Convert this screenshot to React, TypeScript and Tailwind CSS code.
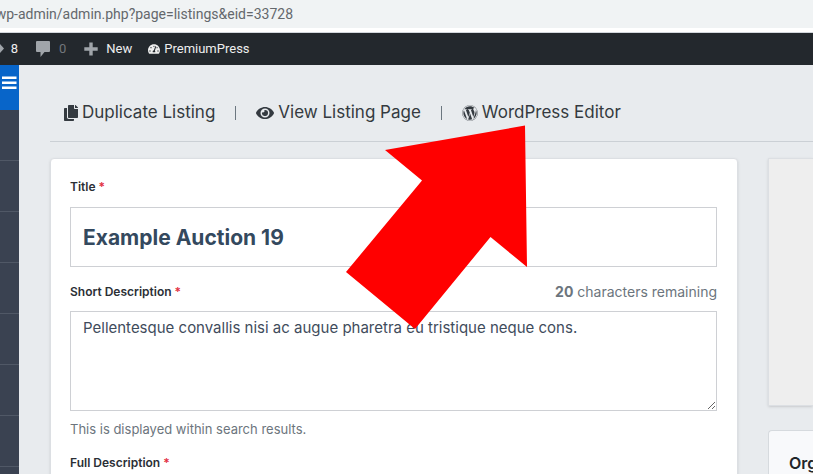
import type { ReactNode } from "react";
import { FaCopy, FaEye, FaTachometerAlt, FaWordpress } from "react-icons/fa";

const menuRows = [1, 2, 3, 4, 5, 6, 7, 8];

function AddressBar() {
  return (
    <div className="flex h-[33px] shrink-0 border-b border-[#d3d7dc] bg-white pb-1">
      <div className="flex flex-1 items-center bg-[#f0f3f4]">
        <div className="flex w-[293px] justify-end overflow-hidden whitespace-nowrap font-[Roboto,sans-serif] text-sm leading-5 text-[#64686c]">
          wp-admin/admin.php?page=listings&amp;eid=33728
        </div>
      </div>
    </div>
  );
}

function AdminBar() {
  return (
    <nav className="flex h-8 shrink-0 items-center bg-[#23282d] font-[Roboto,sans-serif] text-[13px] leading-8 text-[#eeeeee]">
      <a href="#updates" className="flex w-[18px] items-center justify-between">
        <svg width="4" height="10" viewBox="0 0 4 10" fill="#a0a5aa" aria-hidden="true">
          <path d="M0 0 4 4.500 0 9z" />
        </svg>
        8
      </a>
      <a href="#comments" className="ml-[17px] flex items-center gap-2 text-[#72777c]">
        <svg width="16" height="16" viewBox="0 0 16 16" fill="#a0a5aa" aria-hidden="true">
          <path d="M2 0h12q1 0 1 1v9q0 1-1 1H9.500L5.500 16v-5H2q-1 0-1-1V1q0-1 1-1z" />
        </svg>
        0
      </a>
      <a href="#new" className="ml-[18px] flex items-center gap-2">
        <svg width="14" height="14" viewBox="0 0 14 14" fill="#a0a5aa" aria-hidden="true">
          <path d="M5.300 0.500h3.400v4.800h5v3.400h-5v4.800H5.300V8.700h-5V5.300h5z" />
        </svg>
        New
      </a>
      <a href="#premiumpress" className="ml-4 flex items-center gap-1">
        <FaTachometerAlt size={12} />
        PremiumPress
      </a>
    </nav>
  );
}

function Sidebar() {
  return (
    <aside className="w-[19px] shrink-0 bg-[#3a4251]">
      <button type="button" aria-label="Menu" className="flex h-[45px] w-full items-start bg-[#0865c9] pt-[11px] pl-[2px]">
        <svg width="15" height="14" viewBox="0 0 15 14" fill="#ffffff" aria-hidden="true">
          <path d="M0 0.500h14.500v2.500H0zM0 5.500h14.500v2.500H0zM0 10.500h14.500v2.500H0z" />
        </svg>
      </button>
      {menuRows.map((row) => (
        <div key={row} className="h-[51px] border-b border-[#505866]" />
      ))}
    </aside>
  );
}

function Divider() {
  return <span className="h-[14px] w-px bg-[#6c7780]" />;
}

function FieldLabel({ htmlFor, children }: { htmlFor: string; children: ReactNode }) {
  return (
    <label htmlFor={htmlFor} className="text-xs leading-5 font-semibold text-[#2b2f36]">
      {children} <span className="text-[#e2303f]">*</span>
    </label>
  );
}

function ListingForm() {
  return (
    <form className="min-w-0 rounded-t border border-[#dcdfe3] bg-white pt-[18px] pr-5 pl-[19px] shadow-sm">
      <div className="flex flex-col gap-[10px]">
        <FieldLabel htmlFor="title">Title</FieldLabel>
        <input
          id="title"
          type="text"
          defaultValue="Example Auction 19"
          className="h-[60px] w-full border border-[#ced0d4] px-3 text-[21px] font-bold text-[#34495e] outline-none"
        />
      </div>
      <div className="mt-[15px] flex items-center justify-between">
        <FieldLabel htmlFor="short">Short Description</FieldLabel>
        <span className="text-sm leading-5 text-[#6c757d]">
          <b>20</b> characters remaining
        </span>
      </div>
      <textarea
        id="short"
        defaultValue="Pellentesque convallis nisi ac augue pharetra eu tristique neque cons."
        className="mt-[9px] block h-[100px] w-full resize-y border border-[#ced0d4] px-3 py-[6px] text-[15px] leading-5 text-[#3f4c5c] outline-none"
      />
      <p className="mt-2 text-[13px] leading-5 text-[#6c757d]">This is displayed within search results.</p>
      <div className="mt-[14px] flex flex-col gap-[10px]">
        <FieldLabel htmlFor="full">Full Description</FieldLabel>
        <textarea id="full" className="h-20 w-full border border-[#ced0d4]" />
      </div>
    </form>
  );
}

function BigArrow() {
  return (
    <svg
      className="pointer-events-none absolute top-[125px] left-[345px]"
      width="183"
      height="204"
      viewBox="345 125 183 204"
      fill="#ff0000"
      aria-hidden="true"
    >
      <path d="M525 125.500 527 267 490.500 237 415 329 346 272 422 180.500 385 150z" />
    </svg>
  );
}

export default function App() {
  return (
    <div className="relative flex h-screen flex-col overflow-hidden bg-[#e8ebee] font-[Inter,sans-serif]">
      <AddressBar />
      <AdminBar />
      <div className="flex min-h-0 flex-1">
        <Sidebar />
        <main className="min-w-0 flex-1 pl-[31px]">
          <div className="flex h-[77px] items-center gap-5 border-b border-[#cbd0d5] pt-5 pl-[14px] text-[17px] whitespace-nowrap text-[#343a40]">
            <a href="#duplicate" className="flex items-center gap-1">
              <FaCopy className="h-4 w-[14px]" />
              Duplicate Listing
            </a>
            <Divider />
            <a href="#view" className="flex items-center gap-1">
              <FaEye size={18} />
              View Listing Page
            </a>
            <Divider />
            <a href="#editor" className="flex items-center gap-1">
              <FaWordpress size={16} />
              WordPress Editor
            </a>
          </div>
          <div className="mt-4 grid grid-cols-[1fr_45px] gap-[30px]">
            <ListingForm />
            <div className="flex min-w-0 flex-col gap-6">
              <div className="h-[248px] border-y border-l border-[#dcdfe3] bg-[#eeeeee] shadow-sm" />
              <div className="h-[200px] overflow-hidden rounded-tl border-t border-l border-[#d6dade] bg-[#f8f9fb] pt-5 pl-5">
                <h2 className="text-base leading-6 font-semibold text-[#212529]">Org</h2>
              </div>
            </div>
          </div>
        </main>
      </div>
      <BigArrow />
    </div>
  );
}
